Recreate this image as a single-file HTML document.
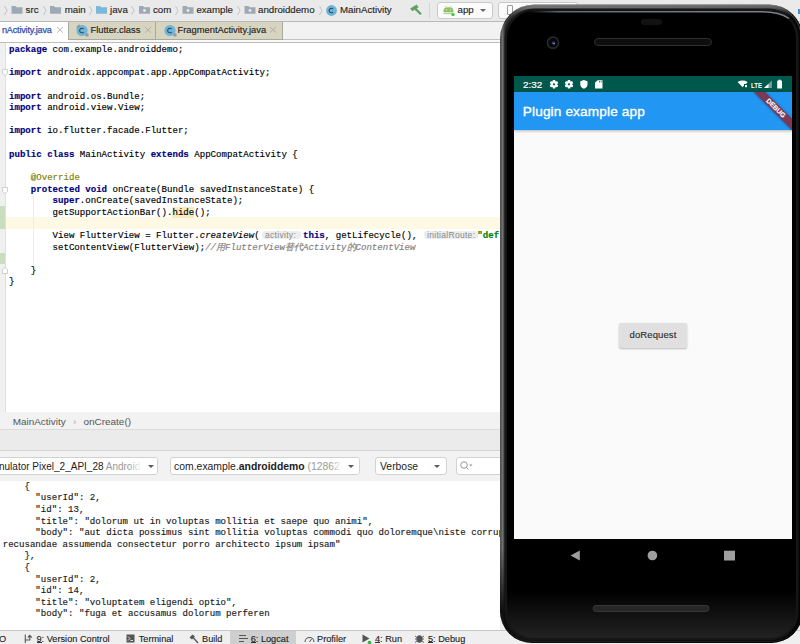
<!DOCTYPE html>
<html><head><meta charset="utf-8">
<style>
*{margin:0;padding:0;box-sizing:border-box}
html,body{width:800px;height:644px;overflow:hidden;background:#f0f0f0;font-family:"Liberation Sans",sans-serif;position:relative}
.abs{position:absolute}
.t{position:absolute;white-space:nowrap}
#crumb{left:0;top:0;width:800px;height:21.5px;background:#eaeaea;border-bottom:1px solid #b8b8b8}
#crumb .t{top:4px;font-size:9.7px;line-height:11px;color:#262626;-webkit-text-stroke:0.15px #262626}
.chev{position:absolute;top:5px;width:4px;height:10px}
#tabs{left:0;top:21.5px;width:800px;height:21px;background:#f2f2f2;border-bottom:1px solid #bcbcbc}
.tab{position:absolute;top:0;height:18px;background:#d7d5c0;border-right:1px solid #aaa9a0;border-bottom:1px solid #aaa9a0;font-size:9.35px;color:#222;white-space:nowrap}
.tab .t{top:3.5px;line-height:11px;-webkit-text-stroke:0.15px #222}
.x{position:absolute;color:#a8a8a8;font-size:10px;line-height:10px}
#editor{left:0;top:42.5px;width:500px;height:369.5px;background:#fff}
#gutter{left:0;top:42.5px;width:5.5px;height:370px;background:#f0f0f0;border-right:1px solid #e0e0e0}
.code{position:absolute;left:9px;font-family:"Liberation Mono",monospace;font-size:9.08px;line-height:11.605px;white-space:pre;color:#000;-webkit-text-stroke:0.15px currentColor}
.k{color:#000080;font-weight:bold}
.an{color:#808000}
.it{font-style:italic}
.cm{color:#808080;font-style:italic}
.st{color:#008000;font-weight:bold}
.hl{background:#f6ecc4}
.hint{position:absolute;top:230.5px;height:8.5px;background:#ededed;border-radius:3px;font-size:8.5px;line-height:8.5px;letter-spacing:0.3px;color:#8a8a8a;white-space:nowrap}
#crumb2{left:0;top:412px;width:500px;height:18px;background:#f2f2f2;border-bottom:1px solid #dcdcdc}
#crumb2 .t{top:3.8px;font-size:9.95px;line-height:11px;color:#555}
#twtitle{left:0;top:430px;width:500px;height:21px;background:#ebebeb;border-bottom:1px solid #d4d4d4}
#lctool{left:0;top:451px;width:500px;height:30px;background:#f2f2f2}
.dd{position:absolute;top:6px;height:18px;background:#fff;border:1px solid #d2d2d2;border-radius:3px;font-size:10.4px;line-height:16px;white-space:nowrap;overflow:hidden;color:#222}
.arr{position:absolute;top:13.6px;width:0;height:0;border-left:3.5px solid transparent;border-right:3.5px solid transparent;border-top:3.5px solid #5a5a5a}
#logcat{left:0;top:481px;width:500px;height:149px;background:#fff;overflow:hidden}
.log{position:absolute;left:2px;top:0;font-family:"Liberation Mono",monospace;font-size:9.08px;line-height:11.6px;white-space:pre;color:#1a1a1a;-webkit-text-stroke:0.15px currentColor}
#bottombar{left:0;top:630px;width:800px;height:14px;background:#efefef;border-top:1px solid #c6c6c6;font-size:9.2px;color:#222}
#bottombar .t{top:3px;line-height:10px;-webkit-text-stroke:0.12px #222}
u{text-decoration:underline;text-decoration-thickness:0.6px;text-underline-offset:0.5px}
/* phone */

#screen{left:514px;top:76px;width:278.3px;height:463px;background:#fafafa;overflow:hidden}
#status{left:0;top:0;width:279px;height:16.4px;background:#00574b}
#status .t{color:#fff;font-size:9.9px;line-height:10px;top:4.3px;-webkit-text-stroke:0.2px #fff}
#appbar{left:0;top:16.3px;width:279px;height:37.9px;background:#2196f3;box-shadow:0 1px 3px rgba(0,0,0,.28)}
#appbar .t{left:8.8px;top:12.3px;color:#fff;font-size:13.6px;line-height:14px;-webkit-text-stroke:0.35px #fff;letter-spacing:0.15px}
#btn{left:105px;top:246.5px;width:68px;height:25px;background:#e0e0e0;border-radius:2px;box-shadow:0 1px 2px rgba(0,0,0,.25);font-size:9.5px;-webkit-text-stroke:0.12px #2a2a2a;color:#2a2a2a;text-align:center;line-height:24px;letter-spacing:0.1px}
#banner{left:278.3px;top:0;width:0;height:0;transform:rotate(45deg);transform-origin:0 0}
#banner div{position:absolute;left:-27.2px;top:19px;width:54.4px;height:8.2px;background:#7b3a54;color:#fff;font-size:6.7px;line-height:8.3px;text-align:center;font-weight:bold;letter-spacing:0;-webkit-text-stroke:0.1px #fff;box-shadow:0 0 3px rgba(0,0,0,.3)}
</style></head><body>

<!-- top breadcrumb / toolbar -->
<div id="crumb" class="abs">
  <svg class="abs" style="left:0;top:0" width="800" height="21">
    <g fill="none" stroke="#bdbdbd" stroke-width="0.9">
      <path d="M4.5 6 L7 10.5 L4.5 15"/><path d="M43.5 6 L46 10.5 L43.5 15"/><path d="M89.5 6 L92 10.5 L89.5 15"/>
      <path d="M131.5 6 L134 10.5 L131.5 15"/><path d="M175.5 6 L178 10.5 L175.5 15"/><path d="M237.5 6 L240 10.5 L237.5 15"/>
      <path d="M319.5 6 L322 10.5 L319.5 15"/>
    </g>
    <g fill="#9da9b4">
      <path d="M11.5 6 h4 l1.2 1.2 h5.8 v6.6 h-11z"/>
      <path d="M50 6 h4 l1.2 1.2 h5.8 v6.6 h-11z"/>
      <path d="M139 6 h4 l1.2 1.2 h5.8 v6.6 h-11z"/>
      <path d="M182.5 6 h4 l1.2 1.2 h5.8 v6.6 h-11z"/>
      <path d="M244.5 6 h4 l1.2 1.2 h5.8 v6.6 h-11z"/>
    </g>
    <path fill="#7ab8dc" d="M96 6 h4 l1.2 1.2 h5.8 v6.6 h-11z"/>
    <g fill="#ebebeb"><circle cx="144.5" cy="10.5" r="1.4"/><circle cx="188" cy="10.5" r="1.4"/><circle cx="250" cy="10.5" r="1.4"/></g>
    <circle cx="331.5" cy="10.5" r="5.4" fill="#6fb3d9"/>
    <path d="M333.1 8.9 A2.3 2.3 0 1 0 333.1 12.1" fill="none" stroke="#27475a" stroke-width="1.1"/>
    <!-- hammer -->
    <path d="M410.2 8.6 L416.6 4.5 L418.6 7.3 L412.3 11.3z" fill="#5fa362"/><path d="M415.2 8.6 L421 14.3" stroke="#5fa362" stroke-width="2.3"/>
    <rect x="429" y="3" width="1" height="15" fill="#d4d4d4"/>
  </svg>
  <div class="t" style="left:25.6px">src</div>
  <div class="t" style="left:64.7px">main</div>
  <div class="t" style="left:110px">java</div>
  <div class="t" style="left:153px">com</div>
  <div class="t" style="left:196.4px">example</div>
  <div class="t" style="left:258px">androiddemo</div>
  <div class="t" style="left:340px">MainActivity</div>
  <div class="abs" style="left:437px;top:2px;width:56px;height:17px;background:#fbfbfb;border:1px solid #c9c9c9;border-radius:3px"></div>
  <svg class="abs" style="left:443px;top:5px" width="13" height="12"><path d="M2.6 1.2 L3.6 2.6 M8.4 1.2 L7.4 2.6" stroke="#8cc063" stroke-width="0.9"/><path d="M0.6 7.3 V5.6 Q0.6 2.2 5.5 2.2 Q10.4 2.2 10.4 5.6 V7.3z" fill="#8cc063"/><rect x="3" y="4.3" width="1.2" height="1" fill="#f4f4f4"/><rect x="6.8" y="4.3" width="1.2" height="1" fill="#f4f4f4"/><rect x="0.6" y="7.9" width="9.8" height="1.2" fill="#8cc063" opacity="0.7"/><circle cx="10" cy="9.6" r="1.7" fill="#3ec93e"/></svg>
  <div class="t" style="left:457.5px">app</div>
  <div class="arr" style="left:480px;top:9px;border-top-color:#666"></div>
  <div class="abs" style="left:498px;top:2px;width:80px;height:17px;background:#fbfbfb;border:1px solid #c9c9c9;border-radius:3px"></div>
  <div class="abs" style="left:507px;top:5px;width:6px;height:10px;border:1px solid #999;border-radius:1px"></div>
  <div class="abs" style="left:798px;top:9px;width:2px;height:5px;background:#3d8fd6"></div>
</div>

<!-- tabs -->
<div id="tabs" class="abs">
  <div class="abs" style="left:68px;top:17.3px;width:732px;height:1px;background:#c2c2c2"></div><div class="abs" style="left:68px;top:18.3px;width:732px;height:2.2px;background:#f8f8f8"></div>
  <div class="abs" style="left:0;top:0;width:68px;height:20px;background:#fff"></div>
  <div class="t" style="left:2px;top:3.5px;font-size:9.1px;line-height:11px;color:#2f4fa8;letter-spacing:-0.2px;-webkit-text-stroke:0.25px #2f4fa8">nActivity.java</div>
  <svg class="abs" style="left:55.8px;top:4.899999999999999px" width="7.900000000000006" height="7.600000000000001"><path d="M1 1 L6.900000000000006 6.600000000000001 M6.900000000000006 1 L1 6.600000000000001" stroke="#a6a6a6" stroke-width="0.85"/></svg>
  <div class="tab" style="left:68px;width:88px;border-left:1px solid #aaa9a0">
    <svg class="abs" style="left:6.5px;top:2.5px" width="13" height="13"><circle cx="6" cy="6.5" r="5.6" fill="#6fb3d9"/><path d="M7.6 4.9 A2.3 2.3 0 1 0 7.6 8.1" fill="none" stroke="#27475a" stroke-width="1.1"/><path d="M0.3 3 L3 0.3 L4.4 1.7 L1.7 4.4z M9.5 9.5 h3 v3 h-3z" fill="#8e9aa3"/></svg>
    <div class="t" style="left:21.5px">Flutter.class</div>
    <svg class="abs" style="left:75.4px;top:4.600000000000001px" width="8.199999999999989" height="7.799999999999997"><path d="M1 1 L7.199999999999989 6.799999999999997 M7.199999999999989 1 L1 6.799999999999997" stroke="#a6a6a6" stroke-width="0.85"/></svg>
  </div>
  <div class="tab" style="left:156px;width:127px">
    <svg class="abs" style="left:8px;top:2.5px" width="13" height="13"><circle cx="6" cy="6.5" r="5.6" fill="#6fb3d9"/><path d="M7.6 4.9 A2.3 2.3 0 1 0 7.6 8.1" fill="none" stroke="#27475a" stroke-width="1.1"/><path d="M9.5 9.5 h3 v3 h-3z" fill="#8e9aa3"/></svg>
    <div class="t" style="left:21.5px">FragmentActivity.java</div>
    <svg class="abs" style="left:113.25px;top:4.75px" width="8.0" height="7.5"><path d="M1 1 L7.0 6.5 M7.0 1 L1 6.5" stroke="#a6a6a6" stroke-width="0.85"/></svg>
  </div>
</div>

<!-- editor -->
<div id="editor" class="abs"></div>
<div class="abs" style="left:5px;top:217px;width:495px;height:11.7px;background:#fef9e5"></div>
<div id="gutter" class="abs"></div>
<div class="abs" style="left:0;top:206px;width:4.5px;height:23px;background:#c9ddc1"></div>
<div class="abs" style="left:0;top:252.5px;width:4.5px;height:11.5px;background:#c9ddc1"></div>
<div class="abs" style="left:33px;top:195px;width:1px;height:70px;background:#ececec"></div>
<svg class="abs" style="left:0;top:60px" width="10" height="230">
  <g fill="#fff" stroke="#c4c4c4" stroke-width="0.8">
    <path d="M2.5 9.5 h5 v4 l-2.5 2 l-2.5 -2z"/>
    <path d="M2.5 127.5 h5 v4 l-2.5 2 l-2.5 -2z"/>
    <path d="M2.5 209.5 l2.5 -2 l2.5 2 v4 h-5z"/>
  </g>
</svg>

<div class="code" style="top:44.2px"><span class="k">package</span> com.example.androiddemo;

<span class="k">import</span> androidx.appcompat.app.AppCompatActivity;

<span class="k">import</span> android.os.Bundle;
<span class="k">import</span> android.view.View;

<span class="k">import</span> io.flutter.facade.Flutter;

<span class="k">public class</span> MainActivity <span class="k">extends</span> AppCompatActivity {

    <span class="an">@Override</span>
    <span class="k">protected void</span> onCreate(Bundle savedInstanceState) {
        <span class="k">super</span>.onCreate(savedInstanceState);
        getSupportActionBar().<span class="hl">hide</span>();

        View FlutterView = Flutter.<span class="it">createView</span>(
        setContentView(FlutterView);<span class="cm">//用FlutterView替代Activity的ContentView</span>

    }
}</div>
<div class="code" style="top:44.2px;left:303px"><br><br><br><br><br><br><br><br><br><br><br><br><br><br><br><br><span class="k">this</span>, getLifecycle(),           <span class="st">"def</span></div>
<div class="hint" style="left:261.5px;width:39px"><span style="position:absolute;left:3.5px;top:0">activity:</span></div>
<div class="hint" style="left:423.5px;width:54px"><span style="position:absolute;left:3.5px;top:0">initialRoute:</span></div>

<!-- editor breadcrumb -->
<div id="crumb2" class="abs">
  <div class="t" style="left:12.7px">MainActivity</div>
  <div class="t" style="left:73px;color:#aaa">›</div>
  <div class="t" style="left:83.5px">onCreate()</div>
</div>
<div id="twtitle" class="abs"></div>

<!-- logcat toolbar -->
<div id="lctool" class="abs">
  <div class="dd" style="left:-4px;width:162px"><span style="position:absolute;left:2px;top:1px;font-size:10px">nulator Pixel_2_API_28 <span style="color:#9a9a9a">Android</span></span><div class="abs" style="left:132px;top:0;width:28px;height:16px;background:linear-gradient(to right,rgba(255,255,255,0),#fff 45%)"></div></div>
  <div class="dd" style="left:169.6px;width:190px"><span style="position:absolute;left:3.5px;top:1px">com.example.<b>androiddemo</b> <span style="color:#9a9a9a">(12862)</span></span><div class="abs" style="left:160px;top:0;width:28px;height:16px;background:linear-gradient(to right,rgba(255,255,255,0),#fff 40%)"></div></div>
  <div class="dd" style="left:374.5px;width:72px"><span style="position:absolute;left:4.5px;top:1px">Verbose</span></div>
  <div class="dd" style="left:456px;width:60px"></div>
  <div class="arr" style="left:147.8px"></div>
  <div class="arr" style="left:347.8px"></div>
  <div class="arr" style="left:434px"></div>
  <svg class="abs" style="left:459px;top:9px" width="16" height="12"><circle cx="5" cy="5" r="3.3" fill="none" stroke="#999" stroke-width="1"/><path d="M7.3 7.3 L9.5 9.5" stroke="#999" stroke-width="1"/><path d="M10 4.5 h3.5 l-1.75 2z" fill="#999"/></svg>
</div>

<!-- logcat -->
<div id="logcat" class="abs">
<div class="log" style="top:-0.2px;left:2.7px">    {
      "userId": 2,
      "id": 13,
      "title": "dolorum ut in voluptas mollitia et saepe quo animi",
      "body": "aut dicta possimus sint mollitia voluptas commodi quo doloremque\niste corrup
recusandae assumenda consectetur porro architecto ipsum ipsam"
    },
    {
      "userId": 2,
      "id": 14,
      "title": "voluptatem eligendi optio",
      "body": "fuga et accusamus dolorum perferen</div>
</div>

<!-- bottom bar -->
<div id="bottombar" class="abs">
  <div class="t" style="left:-1px">O</div>
  <svg class="abs" style="left:24px;top:2.5px" width="10" height="10"><path d="M1.3 0.5 V9 M1.3 6 H5.8 V2 M3.8 3.6 L5.8 1.4 L7.8 3.6" stroke="#555" stroke-width="1.1" fill="none"/></svg>
  <div class="t" style="left:36.5px">9: Version Control</div>
  <svg class="abs" style="left:126px;top:2.5px" width="9" height="9"><rect x="0.5" y="0.5" width="8" height="8" fill="#555"/><path d="M2 2.5 l2 2 l-2 2 M4.5 6.5 h2.5" stroke="#eee" stroke-width="0.9" fill="none"/></svg>
  <div class="t" style="left:138.7px">Terminal</div>
  <svg class="abs" style="left:188.5px;top:2.5px" width="10" height="10"><path d="M0.5 3.5 l3 -3 l2.5 2 l-1 1 l4.5 5 l-1 1 l-4.5 -5 l-1 1z" fill="#555"/></svg>
  <div class="t" style="left:202px">Build</div>
  <div class="abs" style="left:229.5px;top:0;width:66.5px;height:14px;background:#cfcfcf"></div>
  <svg class="abs" style="left:238.5px;top:3px" width="10" height="9"><path d="M0 1.5 h7 M0 4.5 h9 M0 7.5 h5" stroke="#555" stroke-width="1"/></svg>
  <div class="t" style="left:250.7px">6: Logcat</div>
  <svg class="abs" style="left:303.5px;top:3px" width="11" height="9"><path d="M1 8 a4.5 4.5 0 0 1 9 0" stroke="#555" stroke-width="1.1" fill="none"/><path d="M5.5 8 l2 -3" stroke="#555" stroke-width="1"/></svg>
  <div class="t" style="left:317px">Profiler</div>
  <svg class="abs" style="left:362px;top:2.5px" width="10" height="11"><path d="M0.5 0.5 l7 4 l-7 4z" fill="#555"/><circle cx="7.5" cy="8.5" r="1.8" fill="#3fae4a"/></svg>
  <div class="t" style="left:375px">4: Run</div>
  <svg class="abs" style="left:415px;top:2.5px" width="9" height="10"><ellipse cx="4.5" cy="5" rx="3" ry="3.8" fill="#555"/><path d="M0 2 l2 1.5 M9 2 l-2 1.5 M0 5 h2 M9 5 h-2 M0 8.5 l2 -1.5 M9 8.5 l-2 -1.5" stroke="#555" stroke-width="0.9"/></svg>
  <div class="t" style="left:428px">5: Debug</div>
  <div class="abs" style="left:36.7px;top:11px;width:5px;height:0.8px;background:#333"></div><div class="abs" style="left:250.8px;top:11px;width:5.2px;height:0.8px;background:#333"></div><div class="abs" style="left:375px;top:11px;width:5.4px;height:0.8px;background:#333"></div><div class="abs" style="left:428px;top:11px;width:5.4px;height:0.8px;background:#333"></div>
</div>

<!-- phone -->
<svg class="abs" style="left:500px;top:0" width="303" height="644">
  <defs>
    <linearGradient id="rimH" x1="0" x2="1" y1="0" y2="0">
      <stop offset="0" stop-color="#4c4c4c"/><stop offset="0.008" stop-color="#727272"/><stop offset="0.017" stop-color="#2a2a2a"/>
      <stop offset="0.5" stop-color="#1a1a1a"/>
      <stop offset="0.985" stop-color="#050505"/><stop offset="1" stop-color="#050505"/>
    </linearGradient>
    <linearGradient id="rimV" x1="0" x2="0" y1="0" y2="1">
      <stop offset="0" stop-color="#fff" stop-opacity="0.5"/><stop offset="0.012" stop-color="#fff" stop-opacity="0.12"/><stop offset="0.02" stop-color="#fff" stop-opacity="0"/>
    </linearGradient>
    <linearGradient id="darkB" x1="0" x2="0" y1="0" y2="1">
      <stop offset="0" stop-color="#000" stop-opacity="0"/><stop offset="0.85" stop-color="#000" stop-opacity="0"/><stop offset="0.95" stop-color="#000" stop-opacity="0.85"/><stop offset="1" stop-color="#000" stop-opacity="0.6"/>
    </linearGradient>
    <linearGradient id="innerG" x1="0" x2="0" y1="0" y2="1">
      <stop offset="0" stop-color="#000"/><stop offset="0.925" stop-color="#000"/><stop offset="1" stop-color="#222"/>
    </linearGradient>
  </defs>
  <path d="M34,4.5 H269 A34,34 0 0 1 303,38.5 V611 A32,32 0 0 1 271,643 H32 A32,32 0 0 1 0,611 V38.5 A34,34 0 0 1 34,4.5 Z" fill="url(#rimH)"/>
  <path d="M34,4.5 H269 A34,34 0 0 1 303,38.5 V611 A32,32 0 0 1 271,643 H32 A32,32 0 0 1 0,611 V38.5 A34,34 0 0 1 34,4.5 Z" fill="url(#rimV)"/>
  <path d="M34.0,6 H269.0 A32.5,32.5 0 0 1 301.5,38.5 V611.0 A30.5,30.5 0 0 1 271.0,641.5 H32.0 A30.5,30.5 0 0 1 1.5,611.0 V38.5 A32.5,32.5 0 0 1 34.0,6 Z" fill="none" stroke="#5a5a5a" stroke-width="0.9" opacity="0.8"/>
  <path d="M34,4.5 H269 A34,34 0 0 1 303,38.5 V611 A32,32 0 0 1 271,643 H32 A32,32 0 0 1 0,611 V38.5 A34,34 0 0 1 34,4.5 Z" fill="url(#darkB)"/>
  <path d="M34.0,8.5 H269.0 A29.5,29.5 0 0 1 298.5,38.0 V612.5 A28,28 0 0 1 270.5,640.5 H32.5 A28,28 0 0 1 4.5,612.5 V38.0 A29.5,29.5 0 0 1 34.0,8.5 Z" fill="#161616"/>
  <path d="M34,11 H269 A27,27 0 0 1 296,38 V612 A26,26 0 0 1 270,638 H33 A26,26 0 0 1 7,612 V38 A27,27 0 0 1 34,11 Z" fill="url(#innerG)"/>
  <linearGradient id="hlG" x1="0" x2="1" y1="0" y2="0"><stop offset="0" stop-color="#6c7579" stop-opacity="0"/><stop offset="0.12" stop-color="#6c7579" stop-opacity="0.9"/><stop offset="1" stop-color="#7a8488"/></linearGradient>
  <path d="M28 12 Q34 11.8 44 11.8 H262 Q280 12 289 18.5" fill="none" stroke="url(#hlG)" stroke-width="1.5"/>
  <rect x="141" y="19" width="21" height="6" rx="3" fill="#121212"/>
  <rect x="94.5" y="38.5" width="117" height="7" rx="3.5" fill="#0e0e0e" stroke="#2e2e2e" stroke-width="1"/>
  <circle cx="53" cy="42.7" r="5.6" fill="#08080c" stroke="#2c2c30" stroke-width="1.5"/>
  <circle cx="53.5" cy="43" r="1.8" fill="#2a3470"/><circle cx="54" cy="43.6" r="0.7" fill="#c0c8ff"/>
  <rect x="93" y="605.5" width="116" height="6" rx="3" fill="#262626" stroke="#383838" stroke-width="1"/>
  <path d="M70.5 555.5 L79.8 550.5 V560.5z" fill="#9e9e9e"/>
  <circle cx="152.4" cy="555.5" r="4.8" fill="#9e9e9e"/>
  <rect x="224" y="550.7" width="11" height="9.8" fill="#9e9e9e"/>
</svg>

<div id="screen" class="abs">
  <div id="status" class="abs">
    <div class="t" style="left:9px">2:32</div>
    <svg class="abs" style="left:0;top:0" width="278" height="16">
      <g fill="#fff">
        <g transform="translate(40,8.3)"><circle r="3.2"/><rect x="-1.25" y="-4.3" width="2.5" height="8.6" rx="0.6" transform="rotate(0)"/><rect x="-1.25" y="-4.3" width="2.5" height="8.6" rx="0.6" transform="rotate(60)"/><rect x="-1.25" y="-4.3" width="2.5" height="8.6" rx="0.6" transform="rotate(120)"/></g>
        <g transform="translate(55,8.3)"><circle r="3.2"/><rect x="-1.25" y="-4.3" width="2.5" height="8.6" rx="0.6" transform="rotate(0)"/><rect x="-1.25" y="-4.3" width="2.5" height="8.6" rx="0.6" transform="rotate(60)"/><rect x="-1.25" y="-4.3" width="2.5" height="8.6" rx="0.6" transform="rotate(120)"/></g>
        <path d="M69.9 4 L73.5 5.2 V8.3 Q73.5 11.4 69.9 12.8 Q66.3 11.4 66.3 8.3 V5.2Z"/>
        <path d="M83.6 4.2 H88.5 V12.6 H81 V6.8Z"/>
        <path d="M223.6 5.9 Q228.6 3.3 233.6 5.9 L232 7.9 H230 V9.6 L228.6 11.3z"/>
        <rect x="231" y="9" width="2" height="2.2"/>
        <path d="M250 12 L257.9 4.5 V12z" opacity="0.45"/>
        <path d="M250 12 L254.5 7.7 V12z"/>
        <rect x="263.2" y="4.6" width="4.8" height="8" rx="0.4"/><rect x="264.5" y="3.7" width="2.2" height="1.2"/>
      </g>
      <g fill="#00574b"><circle cx="40" cy="8.3" r="1.1"/><circle cx="55" cy="8.3" r="1.1"/><rect x="85.2" y="5" width="0.8" height="1.4"/><rect x="86.8" y="5" width="0.8" height="1.4"/></g>
    </svg>
    <div class="t" style="left:236.7px;top:5.4px;font-size:7.8px;letter-spacing:0;font-weight:bold;-webkit-text-stroke:0;transform:scaleX(0.78);transform-origin:0 0">LTE</div>
  </div>
  <div id="appbar" class="abs"><div class="t">Plugin example app</div></div>
  <div id="btn" class="abs">doRequest</div>
  <div class="abs" style="left:0;top:16.3px;width:278.3px;height:60px;overflow:hidden"><div id="banner" class="abs"><div>DEBUG</div></div></div>
</div>

</body></html>
